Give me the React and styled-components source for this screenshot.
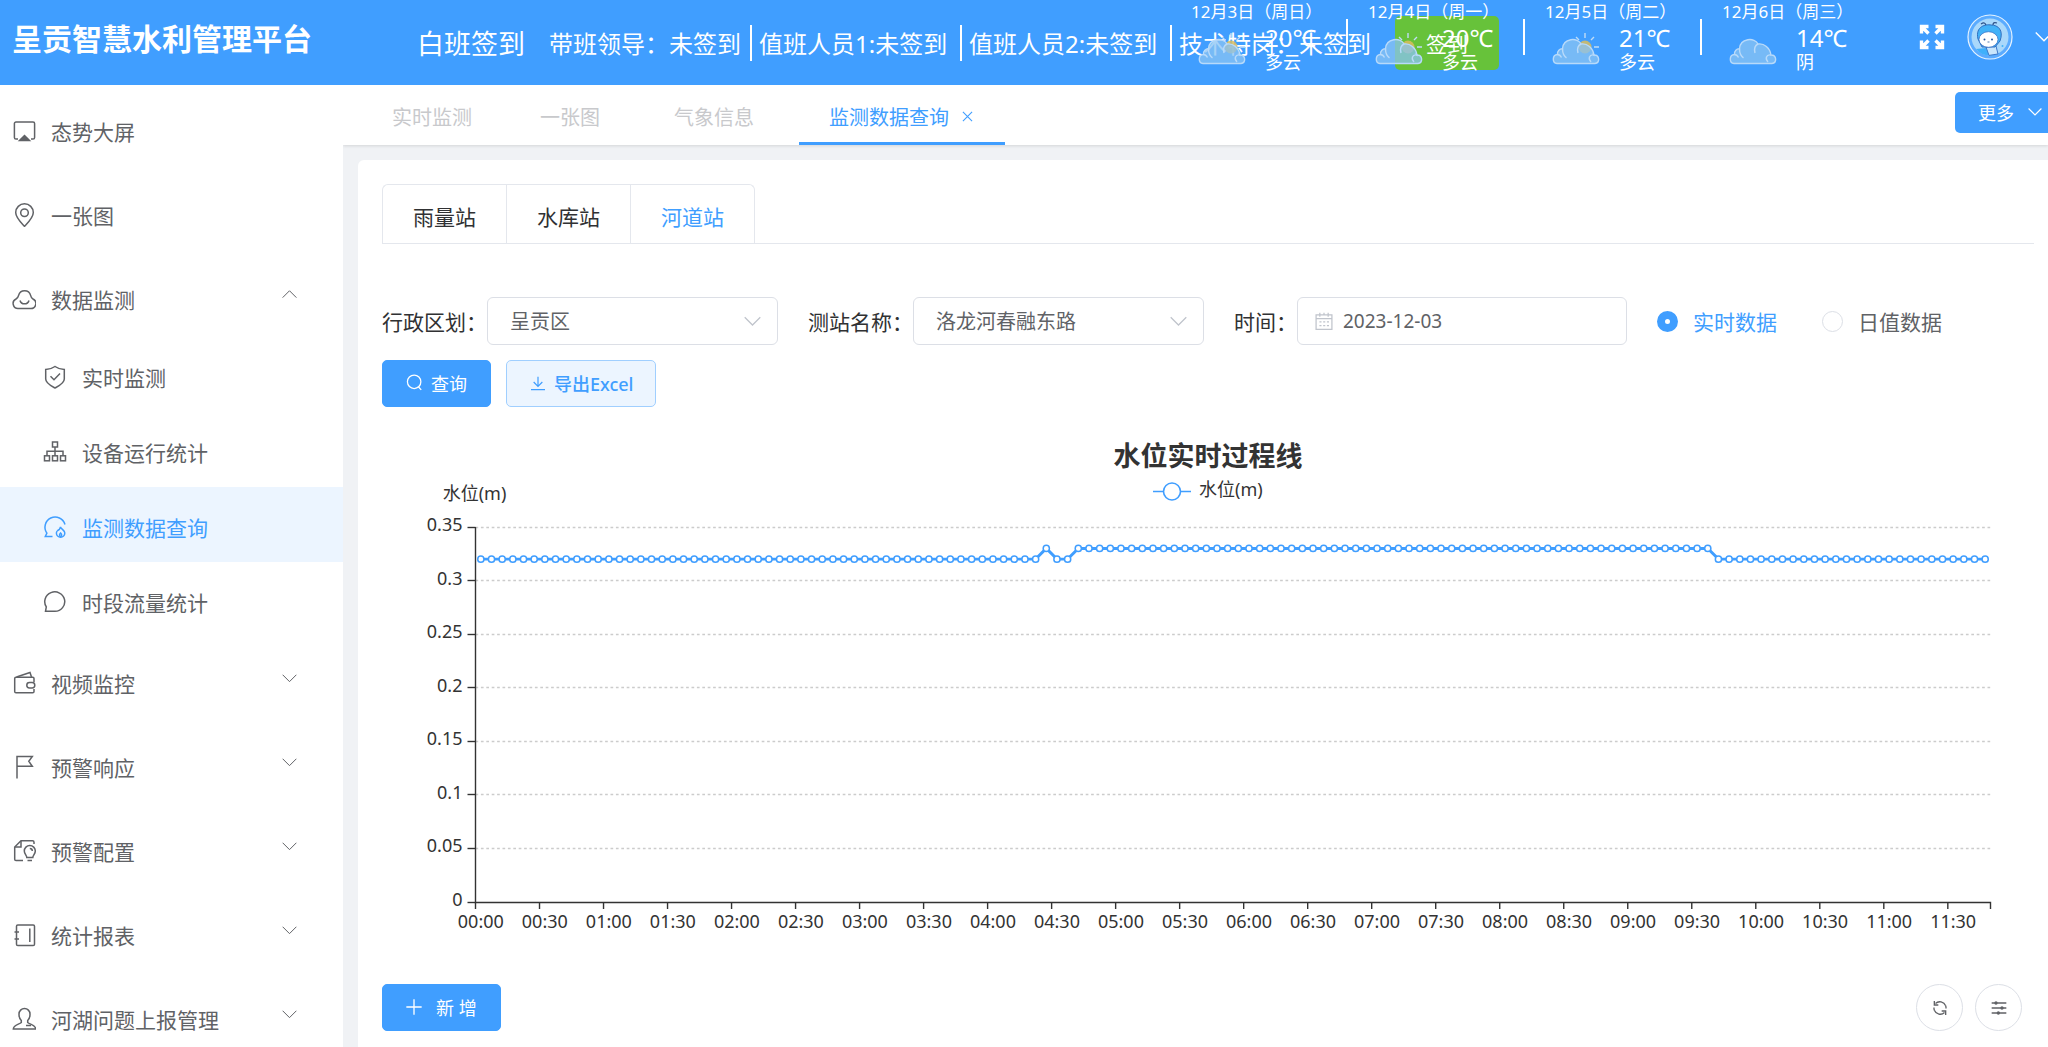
import React, { useEffect, useRef, useState } from "react";
import styled, { createGlobalStyle, css } from "styled-components";

const GlobalStyle = createGlobalStyle`
    *{
        box-sizing: border-box;
    }
    body{
        margin: 0;
        overflow: hidden;
        background: #f0f2f5;
    }
    body, button, input, select{
        font-family: "Noto Sans", "Noto Sans CJK SC", sans-serif;
    }
`

const icons = {
    screen: (
        <>
            <path d="M6 20H4a1.6 1.6 0 0 1-1.6-1.6V4.6A1.6 1.6 0 0 1 4 3h17a1.6 1.6 0 0 1 1.6 1.6v13.8A1.6 1.6 0 0 1 21 20h-2" />
            <path d="M12.500 16.500l5 5h-10z" fill="currentColor" />
        </>
    ),
    pin: (
        <>
            <path d="M12.500 23.500C8 18.600 3.700 14.500 3.700 9.600a8.800 8.800 0 0 1 17.600 0c0 4.900-4.300 9-8.800 13.900z" />
            <circle cx="12.500" cy="9.800" r="3.800" />
        </>
    ),
    cloud: (
        <>
            <path d="M6.500 21.500a5 5 0 0 1-2.500-9.500c1.200-.7 2.200-1.800 2.600-3.600a6.200 6.200 0 0 1 12 0c.4 1.800 1.200 2.900 2.400 3.600a5 5 0 0 1-2.500 9.500z" />
            <path d="M8 13.500a4.700 4.700 0 0 0 9 0" />
        </>
    ),
    shield: (
        <>
            <path d="M12 1.500c2.800 2 5.600 2.900 9.300 3v9.600c0 4.300-5 6.600-9.300 8.900-4.300-2.300-9.300-4.600-9.300-8.900V4.500c3.700-.1 6.500-1 9.300-3z" />
            <path d="M7.500 11.200l3.500 3.500 6-6.200" />
        </>
    ),
    tree: (
        <>
            <rect x="9.500" y="2" width="5" height="5" />
            <rect x="1.500" y="15.800" width="5" height="5" />
            <rect x="9.500" y="15.800" width="5" height="5" />
            <rect x="17.500" y="15.800" width="5" height="5" />
            <path d="M12 7v8.800M4 15.800v-4.500h16v4.500" />
        </>
    ),
    chatDrop: (
        <>
            <path d="M9.500 21.500H2.300l1.600-3.300A10.200 10.200 0 1 1 22 9.500" />
            <path d="M17.500 11.800c.3 2.200 4.300 3.400 4.300 6.200a4.200 4.200 0 0 1-8.400 0c0-1.100.5-1.900 1.300-2.500 1.400-.7 2.400-1.800 2.800-3.700z" />
            <path d="M17.600 22c-1.400-1.200-1.400-2.600 0-4 1.400 1.400 1.400 2.800 0 4z" />
        </>
    ),
    chat: <path d="M2.500 21.300l.8-4.500A10 9.700 0 1 1 12 21.300z" />,
    wallet: (
        <>
            <path d="M22 11V7.500a1.300 1.300 0 0 0-1.300-1.300H4A1.300 1.300 0 0 0 2.700 7.500v13A1.300 1.300 0 0 0 4 21.800h16.700A1.300 1.300 0 0 0 22 20.500V18" />
            <path d="M4.500 6L18 1.500 19.500 6" />
            <rect x="14.800" y="11.500" width="8" height="5.500" rx="2.700" />
        </>
    ),
    flag: <path d="M5 23.500V1.500h15.300l-3.500 4.800 3.500 5H5" />,
    fileBulb: (
        <>
            <path d="M11 21.500H4a1.300 1.300 0 0 1-1.300-1.300V8L9 1.800h11.500A1.500 1.500 0 0 1 22 3.300V5" />
            <path d="M3 8h6V2" />
            <path d="M17.800 6.500a5.500 5.500 0 0 1 5.500 5.500c0 3-2.500 4.500-2.500 6.500h-6c0-2-2.500-3.500-2.500-6.500a5.500 5.500 0 0 1 5.500-5.500zM15.500 21.500h4.500M17.800 9.500a2.500 2.500 0 0 1 2.500 2.500" />
        </>
    ),
    notebook: (
        <>
            <rect x="4.500" y="2" width="18" height="20.500" rx="1.300" />
            <path d="M17.800 5.500v13.500M2.500 9H7M2.500 16H7" />
        </>
    ),
    person: (
        <>
            <path d="M9.300 13.500C6.800 11 7 8.500 7 7a5.500 5.500 0 0 1 11 0c0 1.500.2 4-2.300 6.500v2c2 2 7.800 2 8 6.500H1.300c.2-4.500 6-4.500 8-6.500z" />
            <path d="M14 18.500h5" />
        </>
    ),
    calendar: (
        <>
            <path d="M2.500 4.500h19v17.500h-19zM2.500 9h19M7 2v5M12 2v3M17 2v5" />
            <path d="M6.500 13h2.500M11 13h2.500M15.500 13h2.500M6.500 17.500h2.500M11 17.500h2.500M15.500 17.500h2.500" />
        </>
    ),
    search: (
        <>
            <circle cx="11.500" cy="11" r="9.500" />
            <path d="M17.500 18l4 4.500" />
        </>
    ),
    download: <path d="M12 2.500v14M5.500 10.500l6.500 6.500 6.500-6.500M1.500 21.800h21" />,
    plus: <path d="M12 0.500v23M0.500 12h23" />,
    close: <path d="M2 2l20 20M22 2L2 22" />,
    refresh: (
        <>
            <path d="M3.500 15.500A9.500 9.500 0 0 0 18.800 18.800M20.500 8.500A9.500 9.500 0 0 0 5.200 5.200" />
            <path d="M21 12.800A9.500 9.500 0 0 0 20.500 8.500M3 11.200a9.500 9.500 0 0 0 .5 4.300" />
            <path d="M3.500 1.500v6h6M20.500 22.500v-6h-6" />
        </>
    ),
    sliders: (
        <>
            <path d="M1 4.500h22M1 12h22M1 19.500h22" />
            <circle cx="7.500" cy="4.500" r="1.500" fill="currentColor" />
            <circle cx="16.500" cy="12" r="1.500" fill="currentColor" />
            <circle cx="11" cy="19.500" r="1.500" fill="currentColor" />
        </>
    ),
    down: <path d="M1 6l11 11L23 6" />,
    up: <path d="M1 17L12 6l11 11" />,
}

function Icon({ name, size = 24, weight = 1.5 }) {
    return (
        <svg width={size} height={size} viewBox="0 0 24 24" fill="none"
            stroke="currentColor" strokeWidth={weight} aria-hidden="true">
            {icons[name]}
        </svg>
    )
}

function CloudIcon({ sunny }) {
    return (
        <svg width="48" height="32" viewBox="0 0 48 32" fill="none" aria-hidden="true">
            {sunny && (
                <g stroke="#bfdcf6" strokeWidth="1.400">
                    <circle cx="33" cy="14" r="6.500" fill="#d9bd5f" stroke="none" opacity="0.850" />
                    <path d="M33 0v5M24 4l3 3M42 4l-3 3M42 14h5M40 20l3 3" />
                </g>
            )}
            <path
                d="M5 30.500C0 30 0 22 5.500 21.500 5 18 8 15.500 10.500 15.800 11 5 26 4 29 11c6-1 12 4 13 11 6 0 6 8 1 8.500z"
                fill="#89c3f3" fillOpacity="0.750" stroke="#b8dafa" strokeWidth="1.400" />
            <path d="M10.500 15.800c0 4 1 7 4 9M29 11c-4 2-4 5-3 9M42 22c-5-1-6 4-3 7M5.500 21.500c2 0 3 1 4 3"
                stroke="#b8dafa" strokeWidth="1.400" />
        </svg>
    )
}

function FullscreenIcon() {
    return (
        <svg width="26" height="26" viewBox="0 0 26 26" fill="none" stroke="#fff" strokeWidth="3.400" aria-hidden="true">
            <path d="M2.500 9.500V2.500h7M16.500 2.500h7v7M23.500 16.500v7h-7M9.500 23.500h-7v-7M3 3l6.500 6.500M23 3l-6.500 6.500M23 23l-6.500-6.500M3 23l6.500-6.500" />
        </svg>
    )
}

function Avatar() {
    return (
        <svg width="46" height="46" viewBox="0 0 46 46" aria-hidden="true">
            <circle cx="23" cy="23" r="22" fill="#5aabff" stroke="#e6f3ff" strokeWidth="1.200" />
            <circle cx="23" cy="23" r="18.500" fill="#a9d8fb" />
            <path d="M9 35l10-1 8 7a18.500 18.500 0 0 1-18-6z" fill="#3fb0fb" />
            <path d="M19 33l10-1 2 8-9 1.400z" fill="#c9e6fc" stroke="#3c76c8" strokeWidth="1" />
            <path d="M11 25C8 12 19 10 24 11c7 0 13 5 9 16l-5 6H15z" fill="#42b2f8" stroke="#2f6fc0" strokeWidth="1" />
            <path d="M19 11c-1-2-2-3-5-1M26 11c0-2 1-3 4-2" stroke="#2c4f86" strokeWidth="1.200" fill="none" />
            <ellipse cx="21.500" cy="25.500" rx="9.500" ry="7.800" fill="#fff" stroke="#3c76c8" strokeWidth="0.800" />
            <circle cx="17.500" cy="25.500" r="1" fill="#27599f" />
            <circle cx="25" cy="25.500" r="1" fill="#27599f" />
            <path d="M20.500 28h2" stroke="#27599f" strokeWidth="0.800" />
            <circle cx="35.500" cy="32" r="1" fill="#42b2f8" />
        </svg>
    )
}

const weather = [
    { date: '12月3日（周日）', temp: '20℃', text: '多云', sunny: true },
    { date: '12月4日（周一）', temp: '20℃', text: '多云', sunny: true },
    { date: '12月5日（周二）', temp: '21℃', text: '多云', sunny: true },
    { date: '12月6日（周三）', temp: '14℃', text: '阴', sunny: false },
]

const duties = ['带班领导：未签到', '值班人员1:未签到', '值班人员2:未签到', '技术特岗：未签到']

const menu = [
    { icon: 'screen', title: '态势大屏' },
    { icon: 'pin', title: '一张图' },
    {
        icon: 'cloud', title: '数据监测', children: [
            { icon: 'shield', title: '实时监测' },
            { icon: 'tree', title: '设备运行统计' },
            { icon: 'chatDrop', title: '监测数据查询' },
            { icon: 'chat', title: '时段流量统计' },
        ]
    },
    { icon: 'wallet', title: '视频监控', closed: true },
    { icon: 'flag', title: '预警响应', closed: true },
    { icon: 'fileBulb', title: '预警配置', closed: true },
    { icon: 'notebook', title: '统计报表', closed: true },
    { icon: 'person', title: '河湖问题上报管理', closed: true },
]

// one reading every five minutes, 00:00 - 11:45
const levels = Array.from({ length: 142 }, (_, i) => (
    i === 53 || (i >= 56 && i <= 115) ? 0.33 : 0.32
))
const yLabels = [0, 0.05, 0.1, 0.15, 0.2, 0.25, 0.3, 0.35]

function LevelChart() {
    const box = useRef(null)
    const [width, setWidth] = useState(1652)

    useEffect(() => {
        const observer = new ResizeObserver(([entry]) => setWidth(entry.contentRect.width))
        observer.observe(box.current)
        return () => observer.disconnect()
    }, [])

    const left = 93.5
    const right = width - 43.5
    const top = 89
    const bottom = 464
    const step = (right - left) / levels.length
    const px = (i) => left + step * (i + 0.5)
    const py = (value) => bottom - (value / 0.35) * (bottom - top)
    const center = width / 2
    const ticks = levels.map((_, i) => i).filter((i) => i % 6 === 0)
    const time = (i) => {
        const minutes = i * 5
        return `${String(Math.floor(minutes / 60)).padStart(2, '0')}:${String(minutes % 60).padStart(2, '0')}`
    }

    return (
        <ChartBox ref={box}>
            <svg width={width} height="500" role="img" aria-label="水位实时过程线">
                <ChartTitle x={center} y="28">水位实时过程线</ChartTitle>
                <g stroke="#409eff" strokeWidth="1.600" fill="#fff">
                    <path d={`M${center - 55} 53.500h38`} />
                    <circle cx={center - 36} cy="53.500" r="8.500" />
                </g>
                <ChartLabel x={center - 9} y="58">水位(m)</ChartLabel>
                <ChartLabel x={left - 1} y="62" textAnchor="middle">水位(m)</ChartLabel>
                {yLabels.map((value) => (
                    <g key={value}>
                        {value > 0 && (
                            <path d={`M${left} ${Math.floor(py(value)) + 0.5}H${right}`} stroke="#ccc" strokeWidth="1.300" strokeDasharray="2.700 2.700" />
                        )}
                        <path d={`M${left - 8} ${Math.floor(py(value)) + 0.5}h8`} stroke="#333" strokeWidth="1.400" />
                        <ChartLabel x={left - 13} y={py(value) + 4} textAnchor="end">{value}</ChartLabel>
                    </g>
                ))}
                <path d={`M${left} ${top}V${bottom + 0.5}H${right}v6.500`} stroke="#333" strokeWidth="1.400" fill="none" />
                {ticks.map((i) => (
                    <g key={i}>
                        <path d={`M${left + step * i} ${bottom}v7`} stroke="#333" strokeWidth="1.400" />
                        <ChartLabel x={px(i)} y="490" textAnchor="middle">{time(i)}</ChartLabel>
                    </g>
                ))}
                <polyline points={levels.map((v, i) => `${px(i)},${py(v)}`).join(' ')} fill="none" stroke="#409eff" strokeWidth="2.900" />
                {levels.map((v, i) => (
                    <circle key={i} cx={px(i)} cy={py(v)} r="3.100" fill="#fff" stroke="#409eff" strokeWidth="1.500" />
                ))}
            </svg>
        </ChartBox>
    )
}

function App() {
    const [dataType, setDataType] = useState('realtime')
    const [date, setDate] = useState('2023-12-03')
    return (
        <Page>
            <GlobalStyle />
            <Header>
                <Title>呈贡智慧水利管理平台</Title>
                <Shift>白班签到</Shift>
                <DutyList>
                    {duties.map((duty) => (
                        <Duty key={duty}>{duty}</Duty>
                    ))}
                </DutyList>
                <SignButton>签到</SignButton>
                <Weather>
                    {weather.map((day) => (
                        <React.Fragment key={day.date}>
                            <WeatherDay>
                                <WeatherDate>{day.date}</WeatherDate>
                                <WeatherRow>
                                    <CloudIcon sunny={day.sunny} />
                                    <div>
                                        <Temp>{day.temp}</Temp>
                                        <Sky>{day.text}</Sky>
                                    </div>
                                </WeatherRow>
                            </WeatherDay>
                            <WeatherLine />
                        </React.Fragment>
                    ))}
                </Weather>
                <UserTools>
                    <ToolButton aria-label="全屏"><FullscreenIcon /></ToolButton>
                    <ToolButton aria-label="用户"><Avatar /></ToolButton>
                    <Icon name="down" size={18} weight={1.8} />
                </UserTools>
            </Header>
            <Body>
                <Sidebar>
                    {menu.map((item) => (
                        <div key={item.title}>
                            <MenuItem href="#">
                                <MenuLabel>
                                    <Icon name={item.icon} />
                                    <span>{item.title}</span>
                                </MenuLabel>
                                {item.children && <Icon name="up" size={15} weight={1.6} />}
                                {item.closed && <Icon name="down" size={15} weight={1.6} />}
                            </MenuItem>
                            {item.children?.map((child) => (
                                <SubItem href="#" key={child.title} $active={child.title === '监测数据查询'}>
                                    <MenuLabel>
                                        <Icon name={child.icon} />
                                        <span>{child.title}</span>
                                    </MenuLabel>
                                </SubItem>
                            ))}
                        </div>
                    ))}
                </Sidebar>
                <Main>
                    <TagBar>
                        <Tag href="#">实时监测</Tag>
                        <Tag href="#" $closable>一张图</Tag>
                        <Tag href="#" $closable>气象信息</Tag>
                        <Tag href="#" $active>
                            监测数据查询
                            <Icon name="close" size={11} weight={2.4} />
                        </Tag>
                        <MoreButton>
                            更多
                            <Icon name="down" size={14} weight={2} />
                        </MoreButton>
                    </TagBar>
                    <Card>
                        <StationTabs>
                            <StationTab>雨量站</StationTab>
                            <StationTab>水库站</StationTab>
                            <StationTab $active>河道站</StationTab>
                        </StationTabs>
                        <Filters>
                            <Field>
                                <label htmlFor="area">行政区划：</label>
                                <SelectBox>
                                    <select id="area" defaultValue="呈贡区">
                                        <option>呈贡区</option>
                                    </select>
                                    <Icon name="down" size={17} weight={1.8} />
                                </SelectBox>
                            </Field>
                            <Field>
                                <label htmlFor="station">测站名称：</label>
                                <SelectBox>
                                    <select id="station" defaultValue="洛龙河春融东路">
                                        <option>洛龙河春融东路</option>
                                    </select>
                                    <Icon name="down" size={17} weight={1.8} />
                                </SelectBox>
                            </Field>
                            <Field>
                                <label htmlFor="date">时间：</label>
                                <DateBox>
                                    <Icon name="calendar" size={20} />
                                    <input id="date" value={date} onChange={(e) => setDate(e.target.value)} />
                                </DateBox>
                            </Field>
                            <RadioGroup>
                                <Radio $active={dataType === 'realtime'}>
                                    <input type="radio" name="type" checked={dataType === 'realtime'} onChange={() => setDataType('realtime')} />
                                    实时数据
                                </Radio>
                                <Radio $active={dataType === 'daily'}>
                                    <input type="radio" name="type" checked={dataType === 'daily'} onChange={() => setDataType('daily')} />
                                    日值数据
                                </Radio>
                            </RadioGroup>
                        </Filters>
                        <Actions>
                            <Button>
                                <Icon name="search" size={17} weight={1.8} />
                                查询
                            </Button>
                            <Button $plain>
                                <Icon name="download" size={16} weight={1.8} />
                                导出Excel
                            </Button>
                        </Actions>
                        <LevelChart />
                        <TableBar>
                            <Button $wide>
                                <Icon name="plus" size={16} weight={2} />
                                新 增
                            </Button>
                            <RoundButtons>
                                <RoundButton aria-label="刷新"><Icon name="refresh" size={16} weight={2} /></RoundButton>
                                <RoundButton aria-label="设置"><Icon name="sliders" size={16} weight={2} /></RoundButton>
                            </RoundButtons>
                        </TableBar>
                    </Card>
                </Main>
            </Body>
        </Page>
    )
}

const Page = styled.div`
    height: 100vh;
    display: flex;
    flex-direction: column;
    overflow: hidden;
`

const Header = styled.header`
    position: relative;
    flex: none;
    display: flex;
    align-items: center;
    height: 85px;
    background: #409eff;
    color: white;
    white-space: nowrap;
    overflow: hidden;
`

const Title = styled.h1`
    width: 417px;
    flex: none;
    align-self: flex-start;
    margin: 0;
    padding-left: 12px;
    font-size: 30px;
    line-height: 77px;
    font-weight: 700;
`

const Shift = styled.div`
    flex: none;
    font-size: 27px;
    margin-right: 24px;
`

const DutyList = styled.div`
    display: flex;
    flex: none;
`

const Duty = styled.div`
    width: 210px;
    height: 36px;
    padding-left: 7px;
    border-left: 2px solid white;
    font-size: 24px;
    line-height: 38px;
    &:first-child{
        width: 201px;
        padding-left: 0;
        border-left: 0;
    }
`

const SignButton = styled.button`
    flex: none;
    height: 54px;
    margin-left: 15px;
    padding: 0 31px;
    border: 0;
    border-radius: 5px;
    background: #67c23a;
    color: white;
    font-size: 21px;
`

// floats over the duty list when the window is narrow
const Weather = styled.div`
    position: absolute;
    top: 0;
    right: 171px;
    display: flex;
`

const WeatherDay = styled.div`
    width: 155px;
`

const WeatherDate = styled.div`
    height: 24px;
    font-size: 17px;
    line-height: 23px;
`

const WeatherRow = styled.div`
    display: flex;
    align-items: center;
    gap: 19px;
    padding-left: 7px;
    svg{
        flex: none;
    }
`

const Temp = styled.div`
    font-size: 24px;
    line-height: 27px;
`

const Sky = styled.div`
    font-size: 18px;
    line-height: 22px;
`

const WeatherLine = styled.i`
    width: 2px;
    height: 36px;
    margin: 19px 20px 0 0;
    background: white;
    &:last-child{
        display: none;
    }
`

const UserTools = styled.div`
    display: flex;
    align-items: center;
    align-self: flex-start;
    gap: 22px;
    height: 74px;
    margin-left: auto;
    margin-right: -5px;
`

const ToolButton = styled.button`
    display: flex;
    padding: 0;
    border: 0;
    background: none;
`

const Body = styled.div`
    flex: 1;
    display: flex;
    min-height: 0;
`

const Sidebar = styled.nav`
    flex: none;
    width: 343px;
    background: white;
    overflow: hidden;
`

const MenuItem = styled.a`
    display: flex;
    align-items: center;
    justify-content: space-between;
    height: 84px;
    padding: 0 46px 2px 12px;
    color: #606266;
    font-size: 21px;
    text-decoration: none;
`

const MenuLabel = styled.span`
    display: flex;
    align-items: center;
    gap: 15px;
    padding-top: 10px;
`

const SubItem = styled(MenuItem)`
    height: 75px;
    padding-left: 43px;
    padding-bottom: 5px;
    color: ${(p) => p.$active ? '#409eff' : '#606266'};
    background: ${(p) => p.$active ? '#ecf5ff' : 'white'};
`

const Main = styled.main`
    flex: 1;
    min-width: 0;
    display: flex;
    flex-direction: column;
    background: #f0f2f5;
    overflow: hidden;
`

const TagBar = styled.div`
    flex: none;
    display: flex;
    height: 60px;
    padding-left: 19px;
    background: white;
    box-shadow: 0 1px 3px rgba(0, 0, 0, 0.12);
`

const Tag = styled.a`
    display: flex;
    align-items: center;
    gap: 13px;
    margin-right: 8px;
    padding: 5px 30px 0;
    border-bottom: 3px solid transparent;
    color: #c8c9cc;
    font-size: 20px;
    text-decoration: none;
    ${(p) => p.$closable && css`
        margin-right: 14px;
    `}
    ${(p) => p.$active && css`
        margin-left: 1px;
        padding-right: 32px;
        border-color: #409eff;
        color: #409eff;
    `}
`

const MoreButton = styled.button`
    display: flex;
    align-items: center;
    gap: 14px;
    height: 41px;
    margin: 7px 0 0 auto;
    padding: 0 6px 1px 23px;
    border: 0;
    border-radius: 5px 0 0 5px;
    background: #409eff;
    color: white;
    font-size: 18px;
`

const Card = styled.section`
    flex: 1;
    margin: 15px 0 0 15px;
    padding: 24px 14px 0 24px;
    border-radius: 6px 0 0 0;
    background: white;
`

const StationTabs = styled.div`
    display: flex;
    height: 60px;
    border-bottom: 1px solid #e4e7ed;
`

const StationTab = styled.button`
    padding: 3px 30px 0;
    border: 1px solid #e4e7ed;
    border-right: 0;
    border-bottom: 0;
    background: none;
    color: ${(p) => p.$active ? '#409eff' : '#303133'};
    font-size: 21px;
    &:first-child{
        border-top-left-radius: 6px;
    }
    &:last-child{
        border-right: 1px solid #e4e7ed;
        border-top-right-radius: 6px;
    }
`

const Filters = styled.form`
    display: flex;
    flex-wrap: wrap;
    gap: 15px 30px;
    margin-top: 53px;
`

const Field = styled.div`
    display: flex;
    align-items: center;
    color: #303133;
    font-size: 21px;
`

const inputFrame = css`
    height: 48px;
    border: 1px solid #dcdfe6;
    border-radius: 6px;
    background: white;
    color: #606266;
    font-size: 20px;
`

const SelectBox = styled.div`
    position: relative;
    width: 291px;
    color: #c0c4cc;
    select{
        ${inputFrame}
        width: 100%;
        padding: 0 50px 0 22px;
        appearance: none;
    }
    svg{
        position: absolute;
        top: 16px;
        right: 17px;
        pointer-events: none;
    }
`

const DateBox = styled.div`
    ${inputFrame}
    display: flex;
    align-items: center;
    gap: 9px;
    width: 330px;
    padding-left: 16px;
    color: #c0c4cc;
    input{
        flex: 1;
        min-width: 0;
        padding: 0;
        border: 0;
        outline: 0;
        color: #606266;
        font-size: 19px;
    }
`

const RadioGroup = styled.div`
    display: flex;
    gap: 45px;
`

const Radio = styled.label`
    display: flex;
    align-items: center;
    gap: 15px;
    color: ${(p) => p.$active ? '#409eff' : '#606266'};
    font-size: 21px;
    input{
        appearance: none;
        width: 21px;
        height: 21px;
        margin: 0;
        border: 1px solid #dcdfe6;
        border-radius: 50%;
    }
    input:checked{
        border: 8px solid #409eff;
    }
`

const Actions = styled.div`
    display: flex;
    gap: 15px;
    margin-top: 15px;
`

const Button = styled.button`
    display: flex;
    align-items: center;
    gap: ${(p) => p.$wide ? 14 : 8}px;
    height: 47px;
    padding: 0 23px 2px;
    border: 1px solid #409eff;
    border-radius: 5px;
    background: #409eff;
    color: white;
    font-size: 18px;
    ${(p) => p.$plain && css`
        padding-right: 22px;
        border-color: #a0cfff;
        background: #ecf5ff;
        color: #409eff;
        font-weight: 500;
    `}
`

const ChartBox = styled.div`
    height: 505px;
    margin-top: 31px;
    overflow: hidden;
`

const ChartTitle = styled.text`
    fill: #333;
    font-size: 27px;
    font-weight: 700;
    text-anchor: middle;
`

const ChartLabel = styled.text`
    fill: #333;
    font-size: 18px;
`

const TableBar = styled.div`
    display: flex;
    justify-content: space-between;
    margin-top: 41px;
`

const RoundButtons = styled.div`
    display: flex;
    gap: 12px;
    margin-right: 12px;
`

const RoundButton = styled.button`
    display: flex;
    align-items: center;
    justify-content: center;
    width: 47px;
    height: 47px;
    padding: 0;
    border: 1px solid #dcdfe6;
    border-radius: 50%;
    background: white;
    color: #606266;
`

export default App
